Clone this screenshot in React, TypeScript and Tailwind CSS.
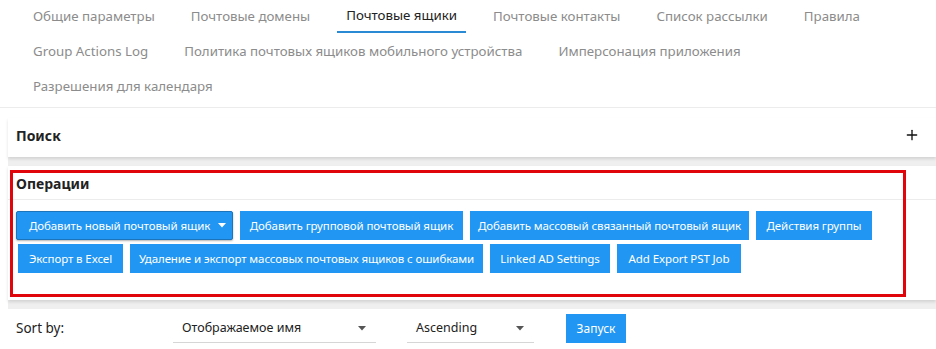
import { Plus } from "lucide-react";

const tabRows = [
  ["Общие параметры", "Почтовые домены", "Почтовые ящики", "Почтовые контакты", "Список рассылки", "Правила"],
  ["Group Actions Log", "Политика почтовых ящиков мобильного устройства", "Имперсонация приложения"],
  ["Разрешения для календаря"],
];

const buttonRows = [
  [
    { label: "Добавить групповой почтовый ящик", w: "w-[223px]" },
    { label: "Добавить массовый связанный почтовый ящик", w: "w-[279px]" },
    { label: "Действия группы", w: "w-[116px]" },
  ],
  [
    { label: "Экспорт в Excel", w: "w-[105px]" },
    { label: "Удаление и экспорт массовых почтовых ящиков с ошибками", w: "w-[353px]" },
    { label: "Linked AD Settings", w: "w-[120px]" },
    { label: "Add Export PST Job", w: "w-[124px]" },
  ],
];

function Caret() {
  return (
    <svg width="8" height="5" viewBox="0 0 8 5" className="shrink-0">
      <path d="M0 0h8L4 4.5z" fill="currentColor" />
    </svg>
  );
}

export default function App() {
  return (
    <div className="relative w-[936px] h-[349px] overflow-hidden bg-white text-[13px] font-['Noto_Sans',sans-serif]">
      {/* Tabs */}
      <div className="pl-6 border-b border-[#ececec] h-[108px]">
        {tabRows.map((row, i) => (
          <div key={i} className="flex gap-x-[18px] h-[35px]">
            {row.map((tab) => {
              const active = tab === "Почтовые ящики";
              return (
                <div
                  key={tab}
                  className={`px-[9px] h-[33px] flex items-center whitespace-nowrap text-[13.3px] ${
                    active ? "text-[#222] border-b-2 border-[#2a8ad4] pt-[1px]" : "text-[#8c8c8c]"
                  }`}
                >
                  {tab}
                </div>
              );
            })}
          </div>
        ))}
      </div>

      <div className="ml-2 mt-[10px] bg-[#efefef] flex flex-col gap-[9px]">
        {/* Search */}
        <div className="bg-white h-[39px] flex items-center justify-between pl-2 pr-4 pb-[5px] shadow-[0_2px_3px_rgba(0,0,0,0.12)]">
          <span className="font-bold text-[14px] text-[#222]">Поиск</span>
          <Plus className="w-4 h-4 text-[#111]" strokeWidth={2} />
        </div>

        {/* Operations */}
        <div className="bg-white h-[134px] shadow-[0_2px_3px_rgba(0,0,0,0.12)]">
          <div className="h-[34px] flex items-center pl-2 pt-[2px] border-b border-[#ececec] font-bold text-[14px] text-[#222]">
            Операции
          </div>
          <div className="pl-2 pt-[11px] flex flex-col gap-1 text-[11.5px] tracking-[-0.1px]">
            <div className="flex gap-[7px]">
              <button className="w-[217px] h-[29px] flex items-center pl-3 bg-[#2196f3] text-white border border-[#1c74bb] rounded-[2px] shadow-[0_1px_2px_rgba(0,0,0,0.3)] whitespace-nowrap">
                <span>Добавить новый почтовый ящик</span>
                <span className="ml-[8px]"><Caret /></span>
              </button>
              {buttonRows[0].map((b) => (
                <button key={b.label} className={`${b.w} h-[29px] bg-[#2196f3] text-white whitespace-nowrap`}>
                  {b.label}
                </button>
              ))}
            </div>
            <div className="flex gap-[7px] pl-[2px]">
              {buttonRows[1].map((b) => (
                <button key={b.label} className={`${b.w} h-[29px] bg-[#2196f3] text-white whitespace-nowrap`}>
                  {b.label}
                </button>
              ))}
            </div>
          </div>
        </div>

        {/* Sort */}
        <div className="bg-white h-[60px] flex items-start pl-2 pt-[5px] text-[12.5px]">
          <span className="w-[157px] h-[29px] flex items-center text-[#222] text-[13.5px]">Sort by:</span>
          <div className="w-[203px] h-[29px] flex items-center justify-between pl-[9px] pr-[10px] border-b border-[#d6d6d6] text-[#222]">
            <span>Отображаемое имя</span>
            <span className="text-[#555]"><Caret /></span>
          </div>
          <div className="ml-[31px] w-[127px] h-[29px] flex items-center justify-between pl-[9px] pr-[10px] border-b border-[#d6d6d6] text-[#222]">
            <span>Ascending</span>
            <span className="text-[#555]"><Caret /></span>
          </div>
          <button className="ml-8 w-[60px] h-[29px] bg-[#2196f3] text-white text-[12px]">Запуск</button>
        </div>
      </div>

      {/* Annotation */}
      <div className="absolute left-[10px] top-[170px] w-[896px] h-[127px] border-[3px] border-[#e0040b] pointer-events-none" />
    </div>
  );
}
